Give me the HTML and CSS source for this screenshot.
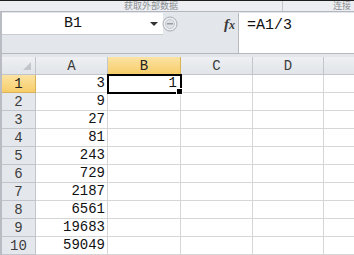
FILE: index.html
```html
<!DOCTYPE html>
<html lang="zh-CN">
<head>
    <meta charset="UTF-8">
    <title>Book1</title>
    <link rel="stylesheet" href="styles.css">
</head>
<body>
    <div class="window">
        <!-- bottom of the ribbon, group labels -->
        <div class="ribbon">
            <span class="group-label">获取外部数据</span>
            <span class="group-sep"></span>
            <span class="group-label right">连接</span>
        </div>

        <!-- name box + formula bar -->
        <div class="formula-bar">
            <div class="name-area">
                <div class="name-row">
                    <div class="name-box">
                        <span class="cell-ref">B1</span>
                        <span class="drop-arrow"></span>
                    </div>
                    <svg class="round-btn" width="16" height="18" viewBox="0 0 16 18">
                        <circle cx="8" cy="9" r="7" fill="#eef0f2" stroke="#a9adb3"/>
                        <circle cx="8" cy="9" r="4.5" fill="#dfe2e6" stroke="#c4c7cc"/>
                        <rect x="5" y="8" width="6" height="1.5" fill="#9a9ea4"/>
                    </svg>
                    <span class="fx">f<span class="fx-x">x</span></span>
                </div>
            </div>
            <div class="formula">=A1/3</div>
        </div>

        <div class="bar-gap"></div>

        <!-- worksheet -->
        <div class="sheet">
            <div class="hd corner"><span class="corner-mark"></span></div>
            <div class="hd col">A</div>
            <div class="hd col active">B</div>
            <div class="hd col">C</div>
            <div class="hd col">D</div>
            <div class="hd col"></div>

            <div class="hd row active">1</div>
            <div class="cell num">3</div>
            <div class="cell num selected">1<span class="fill-handle"></span></div>
            <div class="cell"></div><div class="cell"></div><div class="cell"></div>

            <div class="hd row">2</div>
            <div class="cell num">9</div>
            <div class="cell"></div><div class="cell"></div><div class="cell"></div><div class="cell"></div>

            <div class="hd row">3</div>
            <div class="cell num">27</div>
            <div class="cell"></div><div class="cell"></div><div class="cell"></div><div class="cell"></div>

            <div class="hd row">4</div>
            <div class="cell num">81</div>
            <div class="cell"></div><div class="cell"></div><div class="cell"></div><div class="cell"></div>

            <div class="hd row">5</div>
            <div class="cell num">243</div>
            <div class="cell"></div><div class="cell"></div><div class="cell"></div><div class="cell"></div>

            <div class="hd row">6</div>
            <div class="cell num">729</div>
            <div class="cell"></div><div class="cell"></div><div class="cell"></div><div class="cell"></div>

            <div class="hd row">7</div>
            <div class="cell num">2187</div>
            <div class="cell"></div><div class="cell"></div><div class="cell"></div><div class="cell"></div>

            <div class="hd row">8</div>
            <div class="cell num">6561</div>
            <div class="cell"></div><div class="cell"></div><div class="cell"></div><div class="cell"></div>

            <div class="hd row">9</div>
            <div class="cell num">19683</div>
            <div class="cell"></div><div class="cell"></div><div class="cell"></div><div class="cell"></div>

            <div class="hd row">10</div>
            <div class="cell num">59049</div>
            <div class="cell"></div><div class="cell"></div><div class="cell"></div><div class="cell"></div>
        </div>
    </div>
</body>
</html>
```

FILE: styles.css
```css
body {
    margin: 0;
    padding: 0;
    background-color: #fff;
    font-family: "Liberation Mono", "Noto Sans CJK SC", monospace;
}

.window {
    width: 354px;
    height: 255px;
    overflow: hidden;
}

/* ribbon strip */
.ribbon {
    display: flex;
    align-items: center;
    height: 10px;
    border-top: 1px solid #1e1e1e;
    border-bottom: 1px solid #b4b8be;
    background-color: #eceef1;
    overflow: hidden;
}

.group-label {
    width: 178px;
    font-family: "Noto Sans CJK SC", sans-serif;
    font-size: 9px;
    line-height: 10px;
    color: #8a8d92;
    text-align: right;
}

.group-label.right {
    width: auto;
    margin-left: 50px;
}

.group-sep {
    width: 1px;
    height: 10px;
    margin-left: 104px;
    background-color: #c3c6cb;
}

/* formula bar */
.formula-bar {
    display: flex;
    height: 41px;
    border-left: 2px solid #b9bdc3;
    border-bottom: 1px solid #b4b8be;
    background-color: #e3e6ea;
}

.name-area {
    width: 236px;
    padding-top: 1px;
}

.name-row {
    display: flex;
    align-items: center;
    height: 22px;
}

.name-box {
    display: flex;
    align-items: center;
    width: 161px;
    height: 22px;
    background-color: #fff;
    border-bottom: 1px solid #c9ccd1;
    box-sizing: border-box;
}

.cell-ref {
    width: 142px;
    text-align: center;
    font-size: 15px;
    color: #111;
}

.drop-arrow {
    width: 0;
    height: 0;
    margin-left: 6px;
    border-left: 4px solid transparent;
    border-right: 4px solid transparent;
    border-top: 4px solid #333;
}

.round-btn {
    margin-left: -1px;
}

.fx {
    margin-left: 46px;
    font-family: "Liberation Serif", serif;
    font-style: italic;
    font-weight: bold;
    font-size: 15px;
    color: #3a3a3a;
}

.fx-x {
    font-size: 12px;
}

.formula {
    flex: 1;
    margin-top: 1px;
    padding: 4px 0 0 8px;
    background-color: #fff;
    border-left: 1px solid #b7bbc1;
    font-size: 15px;
    color: #111;
}

.bar-gap {
    height: 3px;
    border-left: 2px solid #b9bdc3;
    background-color: #e3e6ea;
}

/* worksheet grid */
.sheet {
    display: grid;
    grid-template-columns: 34px 72px 73px 72px 71px 32px;
    grid-template-rows: 18px;
    grid-auto-rows: 18px;
    border-left: 2px solid #b9bdc3;
    font-size: 14px;
}

.hd {
    display: flex;
    align-items: center;
    justify-content: center;
    box-sizing: border-box;
    border-right: 1px solid #c2c6cc;
    border-bottom: 1px solid #c2c6cc;
    background: linear-gradient(#eef0f3, #e1e4e8);
    color: #3d3d3d;
    font-size: 14px;
}

.hd.row {
    background: #e4e7eb;
}

.hd.active {
    background: linear-gradient(#fbe3a2, #f7cd6a);
    border-color: #d9b35a;
    color: #222;
}

.corner {
    position: relative;
}

.corner-mark {
    position: absolute;
    right: 4px;
    bottom: 4px;
    width: 0;
    height: 0;
    border-left: 8px solid transparent;
    border-bottom: 8px solid #c3c7cc;
}

.cell {
    box-sizing: border-box;
    border-right: 1px solid #d6d6d6;
    border-bottom: 1px solid #d6d6d6;
    line-height: 17px;
    color: #111;
}

.cell.num {
    text-align: right;
    padding-right: 2px;
}

.cell.selected {
    position: relative;
    outline: 2px solid #000;
    outline-offset: -1px;
    padding-right: 3px;
}

.fill-handle {
    position: absolute;
    right: -3px;
    bottom: -3px;
    width: 5px;
    height: 5px;
    background-color: #000;
    border: 1px solid #fff;
}
```
